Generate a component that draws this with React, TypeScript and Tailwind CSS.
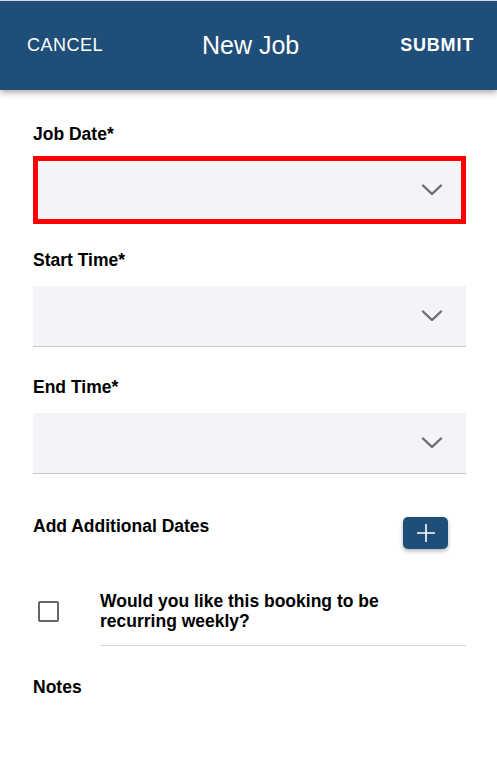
import React from "react";

function Chevron() {
  return (
    <svg width="22" height="12" viewBox="0 0 22 12" fill="none">
      <path d="M2 1.5 L11 10 L20 1.5" stroke="#6b6b6b" strokeWidth="2.4" strokeLinecap="round" strokeLinejoin="round" />
    </svg>
  );
}

function Field({ label, error }: { label: string; error?: boolean }) {
  return (
    <div>
      <div className="text-[17.5px] font-bold text-black leading-5">{label}</div>
      {error ? (
        <div className="mt-[12px] flex h-[68px] items-center justify-end border-[5px] border-[#ff0000] bg-[#f3f4f8] pr-[18px]">
          <Chevron />
        </div>
      ) : (
        <div className="mt-[16px] flex h-[61px] items-center justify-end border-b border-[#c7c7c7] bg-[#f3f4f8] pr-[23px]">
          <Chevron />
        </div>
      )}
    </div>
  );
}

export default function App() {
  return (
    <div className="min-h-[778px] bg-white font-['Liberation_Sans',Arial,sans-serif]">
      {/* Header */}
      <div className="border-t border-[#d9d9d9] bg-[#1f4e79] shadow-[0_3px_6px_rgba(0,0,0,0.3)]">
        <div className="flex h-[89px] items-center justify-between px-[27px] text-white">
          <button className="text-[18px] font-medium tracking-[0.5px]">CANCEL</button>
          <div className="-ml-[2px] text-[25px]">New Job</div>
          <button className="-mr-[4px] text-[18px] font-bold tracking-[0.8px]">SUBMIT</button>
        </div>
      </div>

      {/* Form */}
      <div className="px-[33px] pt-[34px]">
        <div className="-mr-[2px]">
          <Field label="Job Date*" error />
        </div>
        <div className="mt-[26px] -mr-[2px]">
          <Field label="Start Time*" />
        </div>
        <div className="mt-[30px] -mr-[2px]">
          <Field label="End Time*" />
        </div>

        <div className="mt-[33px] flex items-start justify-between">
          <div className="mt-[9px] text-[17.5px] font-bold leading-5 text-black">Add Additional Dates</div>
          <button className="mr-[16px] mt-[10px] flex h-[32px] w-[45px] items-center justify-center rounded-[5px] bg-[#1f4e79] shadow-[0_2px_4px_rgba(0,0,0,0.3)]">
            <svg width="20" height="20" viewBox="0 0 20 20">
              <path d="M10 1 V19 M1 10 H19" stroke="white" strokeWidth="1.6" />
            </svg>
          </button>
        </div>

        <div className="mt-[42px] flex items-start">
          <div className="ml-[5px] mt-[10px] h-[21px] w-[21px] rounded-[2px] border-2 border-[#666666]" />
          <div className="ml-[41px] flex-1 -mr-[2px]">
            <div className="pb-[14px] text-[17.5px] font-bold leading-[20px] text-black">
              Would you like this booking to be
              <br />
              recurring weekly?
            </div>
            <div className="h-px bg-[#d6d6d6]" />
          </div>
        </div>

        <div className="mt-[31px] text-[17.5px] font-bold leading-5 text-black">Notes</div>
      </div>
    </div>
  );
}
